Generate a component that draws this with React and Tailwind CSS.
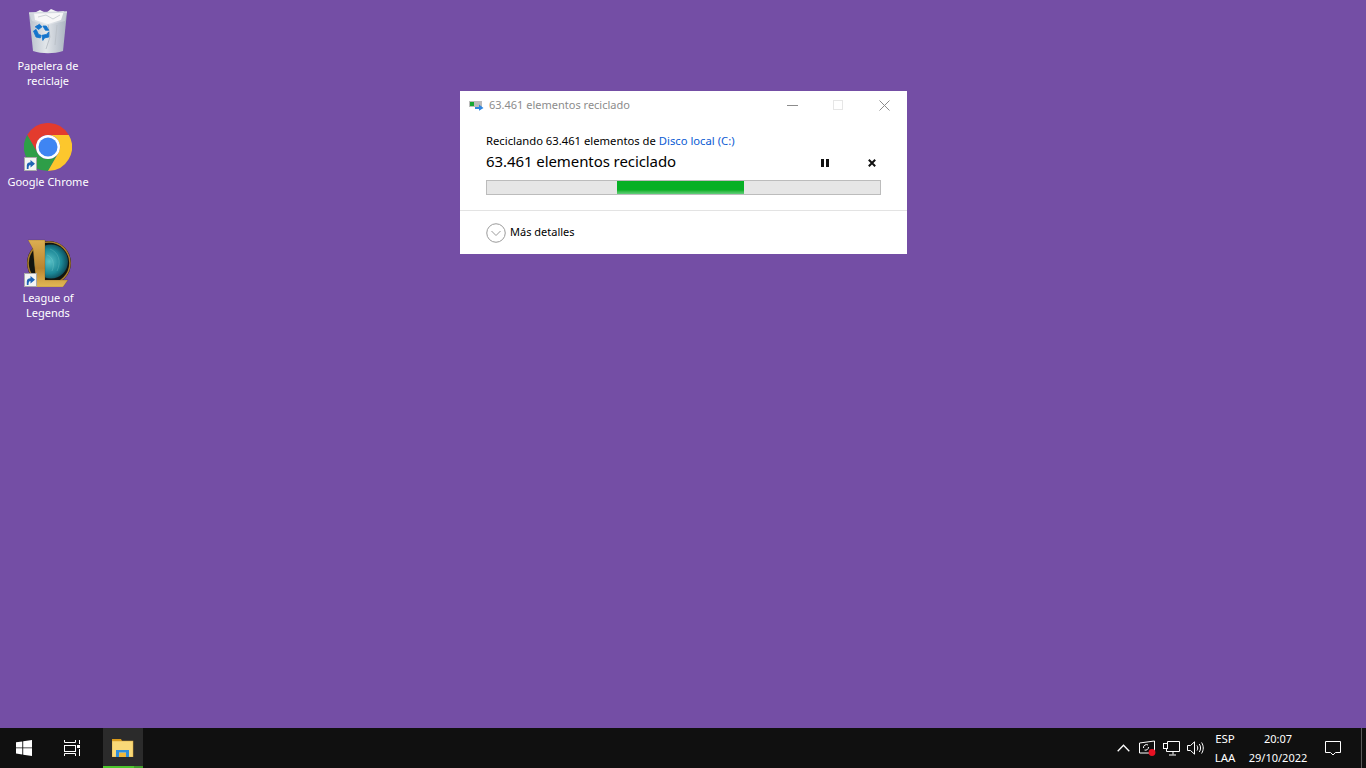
import React from "react";

const uiFont = "font-['Noto_Sans','Open_Sans',sans-serif]";

function ShortcutBadge() {
  return (
    <svg className="absolute left-0 bottom-0" width="13" height="14" viewBox="0 0 13 14">
      <rect x="0.5" y="0.5" width="12" height="13" fill="#f4f4f4" stroke="#a9a9a9" />
      <path d="M2.8 12V8.5C2.8 6.3 4.5 5.3 6.5 5.3V3L11 6.8L6.5 10.4V8.1C5.2 8.1 4.6 9 4.5 12Z" fill="#1f63b5" />
    </svg>
  );
}

function RecycleBin() {
  return (
    <svg width="48" height="48" viewBox="0 0 48 48">
      <defs>
        <linearGradient id="binBody" x1="0" y1="0" x2="1" y2="0">
          <stop offset="0" stopColor="#b9c1cc" />
          <stop offset="0.45" stopColor="#e2e6ea" />
          <stop offset="1" stopColor="#a9b2bf" />
        </linearGradient>
      </defs>
      <path d="M5 6L43 5L39 44C30 47 18 47 9 44Z" fill="url(#binBody)" />
      <path d="M10 6L16 3L22 6L27 2L34 5L40 4L37 13L24 17L11 13Z" fill="#f4f5f6" />
      <path d="M14 10L22 8L29 12L36 8M24 17L26 30L22 42M33 18L31 38M12 18L16 20" stroke="#bcc2c9" strokeWidth="1" fill="none" />
      <path d="M5 6L43 5L41 14L24 18L8 14Z" fill="#ffffff" fillOpacity="0.25" />
      <path d="M5 6L43 5" stroke="#d5dae1" strokeWidth="1.5" />
      <g transform="translate(1,2) scale(0.85)" stroke="#1474cc" strokeWidth="1">
        <path d="M12 21L17 18L20 21L16 24ZM21 20L25 20L28 25L24 25ZM25 30L28 27L28 33L23 34L21 37L20 31ZM10 26L13 24L16 30L19 31L18 34L13 33Z" fill="#1474cc" />
      </g>
    </svg>
  );
}

function ChromeLogo() {
  return (
    <svg width="48" height="48" viewBox="0 0 48 48">
      <path d="M24 12H44.8A24 24 0 0 0 3.2 12L13.6 30A12 12 0 0 1 24 12Z" fill="#e33b2e" />
      <path d="M3.2 12A24 24 0 0 0 24 48L34.4 30A12 12 0 0 1 13.6 30Z" fill="#2e9e48" />
      <path d="M44.8 12A24 24 0 0 1 24 48L34.4 30A12 12 0 0 0 24 12Z" fill="#fcc72d" />
      <circle cx="24" cy="24" r="12" fill="#ffffff" />
      <circle cx="24" cy="24" r="9.5" fill="#3f85f3" />
    </svg>
  );
}

function LeagueLogo() {
  return (
    <svg width="48" height="48" viewBox="0 0 48 48">
      <defs>
        <radialGradient id="lolWater" cx="0.45" cy="0.5" r="0.6">
          <stop offset="0" stopColor="#57c0c6" />
          <stop offset="0.6" stopColor="#1b8796" />
          <stop offset="1" stopColor="#0a3a48" />
        </radialGradient>
        <linearGradient id="lolGold" x1="0" y1="0" x2="0" y2="1">
          <stop offset="0" stopColor="#dcae52" />
          <stop offset="0.6" stopColor="#b9842f" />
          <stop offset="1" stopColor="#e3b955" />
        </linearGradient>
      </defs>
      <circle cx="25" cy="24" r="22" fill="#12140f" />
      <circle cx="25" cy="24" r="21" fill="none" stroke="#a87a2d" strokeWidth="1.6" />
      <circle cx="27" cy="22.5" r="17" fill="url(#lolWater)" />
      <path d="M26 10C34 13 38 22 33 32M23 16C29 18 31 25 28 32" fill="none" stroke="#a6e6e3" strokeOpacity="0.2" />
      <path d="M4 1H21V41H44L39 48H10L12 42L9 10Z" fill="url(#lolGold)" stroke="#3d2a0c" strokeOpacity="0.4" strokeWidth="0.5" />
    </svg>
  );
}

function DesktopIcon({ label, shortcut, children }) {
  return (
    <div className="w-[84px] h-[116px] flex flex-col items-center">
      <div className="relative w-[48px] h-[48px]">
        {children}
        {shortcut && <ShortcutBadge />}
      </div>
      <span className="mt-[3px] text-[11px] leading-[15px] text-center text-white whitespace-nowrap">{label}</span>
    </div>
  );
}

function DialogIcon() {
  return (
    <svg width="15" height="11" viewBox="0 0 15 11">
      <rect x="0" y="1" width="13" height="6" fill="#bcbcbc" />
      <rect x="1" y="2" width="4" height="4" fill="#16a832" />
      <path d="M6 7H10V4.5L14.5 8L10 10.8V9H6Z" fill="#2f86e0" />
    </svg>
  );
}

function RecycleDialog() {
  return (
    <div className="absolute left-[460px] top-[91px] w-[447px] h-[163px] bg-white flex flex-col">
      <div className="h-[29px] flex items-center pl-[9px]">
        <DialogIcon />
        <span className="ml-[5px] text-[11px] text-[#8c8c8c]">63.461 elementos reciclado</span>
        <div className="ml-auto flex items-center">
          <svg className="w-[46px] h-[29px]" viewBox="0 0 46 29"><rect x="18" y="14" width="11" height="1" fill="#8c8c8c" /></svg>
          <svg className="w-[46px] h-[29px]" viewBox="0 0 46 29"><rect x="18.5" y="9.5" width="9" height="9" fill="none" stroke="#e6e6e6" /></svg>
          <svg className="w-[46px] h-[29px]" viewBox="0 0 46 29"><path d="M18.5 9.5L28.5 19.5M28.5 9.5L18.5 19.5" stroke="#8c8c8c" fill="none" /></svg>
        </div>
      </div>
      <div className="pl-[26px] pr-[26px] pt-[13px] flex flex-col">
        <div className="h-[16px] text-[11.25px] leading-[16px] text-black">
          Reciclando 63.461 elementos de <span className="text-[#0b5bd3]">Disco local (C:)</span>
        </div>
        <div className="mt-[3px] h-[22px] flex items-center">
          <span className="mb-[4px] text-[15px] leading-[22px] text-black tracking-[-0.08px]">63.461 elementos reciclado</span>
          <div className="ml-auto flex items-center mr-[5px] gap-[39px]">
            <svg width="8" height="8" viewBox="0 0 8 8"><rect x="0" y="0" width="3" height="8" fill="#111" /><rect x="5" y="0" width="3" height="8" fill="#111" /></svg>
            <svg width="8" height="8" viewBox="0 0 8 8"><path d="M0.8 0.8L7.2 7.2M7.2 0.8L0.8 7.2" stroke="#111" strokeWidth="2" fill="none" /></svg>
          </div>
        </div>
        <div className="mt-[6px] h-[15px] border border-[#bcbcbc] bg-[#e6e6e6] pl-[130px]">
          <div className="w-[127px] h-full bg-gradient-to-b from-[#06b025] from-70% to-[#5fd07a]" />
        </div>
      </div>
      <div className="mt-[15px] border-t border-[#e3e3e3] flex-1 flex items-center pl-[26px]">
        <svg width="20" height="20" viewBox="0 0 20 20">
          <circle cx="10" cy="10" r="9.25" fill="none" stroke="#9a9a9a" />
          <path d="M5.5 8L10 12.5L14.5 8" fill="none" stroke="#9a9a9a" />
        </svg>
        <span className="ml-[4px] text-[11px] text-black">Más detalles</span>
      </div>
    </div>
  );
}

function WindowsLogo() {
  return (
    <svg width="16" height="16" viewBox="0 0 16 16">
      <path d="M0 2.2L6.3 1.4V7.4H0ZM7.2 1.3L16 0V7.4H7.2ZM0 8.3H6.3V14.4L0 13.6ZM7.2 8.3H16V16L7.2 14.7Z" fill="#ffffff" />
    </svg>
  );
}

function TaskView() {
  return (
    <svg width="17" height="16" viewBox="0 0 17 16" fill="none" stroke="#ffffff">
      <path d="M0.5 0V2.5H11.5V0M0.5 16V13.5H11.5V16" />
      <rect x="0.5" y="5.5" width="11" height="6" />
      <path d="M15.5 0V4M15.5 9V16" />
      <rect x="13" y="5" width="3" height="3" fill="#ffffff" stroke="none" />
    </svg>
  );
}

function ExplorerIcon() {
  return (
    <svg width="22" height="18" viewBox="0 0 22 18">
      <path d="M0 0H9L10 2H0Z" fill="#d99a1a" />
      <rect x="0" y="2" width="21" height="16" fill="#f9d978" stroke="#d8a53a" strokeWidth="0.5" />
      <path d="M4 16V11H17V16H14V13.5H7V16Z" fill="#2f8edb" />
      <rect x="7" y="14" width="7" height="4" fill="#f0b83a" />
      <path d="M4 16H7V18H4ZM14 16H17V18H14Z" fill="#2f8edb" />
    </svg>
  );
}

function Taskbar() {
  return (
    <div className="h-[40px] bg-[#101010] flex items-stretch text-white shrink-0">
      <div className="w-[48px] flex items-center justify-center"><WindowsLogo /></div>
      <div className="w-[48px] flex items-center justify-center"><TaskView /></div>
      <div className="ml-[7px] w-[40px] bg-[#2b2b2b] flex flex-col">
        <div className="flex-1 flex items-center justify-center pt-[2px]"><ExplorerIcon /></div>
        <div className="h-[2px] flex">
          <div className="w-[31px] bg-[#4cc72c]" />
          <div className="flex-1 bg-[#3f9a2a]" />
        </div>
      </div>
      <div className="ml-auto flex items-center">
        <div className="w-[24px] flex justify-center">
          <svg width="13" height="8" viewBox="0 0 13 8"><path d="M0.7 7.3L6.5 1.2L12.3 7.3" fill="none" stroke="#ffffff" strokeWidth="1.3" /></svg>
        </div>
        <div className="w-[24px] flex justify-center">
          <svg width="18" height="16" viewBox="0 0 18 16" fill="none">
            <path d="M1.5 3L16.5 1V13H1.5Z" stroke="#ffffff" />
            <path d="M5.5 8A3 3 0 0 1 10 5M10.5 7A3 3 0 0 1 6.5 10" stroke="#ffffff" />
            <circle cx="14" cy="12.5" r="3.4" fill="#e81123" />
          </svg>
        </div>
        <div className="w-[24px] flex justify-center">
          <svg width="17" height="15" viewBox="0 0 17 15" fill="none" stroke="#ffffff">
            <path d="M4.5 2.5V0.5H16.5V10.5H3.5V7.5" />
            <rect x="0.5" y="2.5" width="4" height="5" />
            <path d="M10 10.5V13.5M6 14H13" />
          </svg>
        </div>
        <div className="w-[24px] flex justify-center">
          <svg width="17" height="14" viewBox="0 0 17 14" fill="none" stroke="#ffffff">
            <path d="M0.5 4.5H3.5L7.5 0.8V13.2L3.5 9.5H0.5Z" />
            <path d="M10 4.5C11 6 11 8 10 9.5M12.3 3C14 5.5 14 8.5 12.3 11M14.6 1.5C16.8 5 16.8 9 14.6 12.5" />
          </svg>
        </div>
        <div className="w-[36px] flex flex-col items-center text-[11.5px] leading-[19px]">
          <span>ESP</span>
          <span>LAA</span>
        </div>
        <div className="w-[70px] flex flex-col items-center text-[11px] leading-[19px]">
          <span>20:07</span>
          <span>29/10/2022</span>
        </div>
        <div className="w-[40px] flex justify-center">
          <svg width="16" height="16" viewBox="0 0 16 16" fill="none" stroke="#ffffff">
            <path d="M0.5 1.5H15.5V12.5H10.5L8 15L5.5 12.5H0.5Z" />
          </svg>
        </div>
        <div className="w-[13px] h-full flex justify-end pr-[4px]">
          <div className="w-px h-full bg-[#5a5a5a]" />
        </div>
      </div>
    </div>
  );
}

export default function App() {
  return (
    <div className={`w-full h-screen overflow-hidden bg-[#744ea5] flex flex-col ${uiFont}`}>
      <div className="relative flex-1 pl-[6px] pt-[7px]">
        <DesktopIcon label={<>Papelera de<br />reciclaje</>}><RecycleBin /></DesktopIcon>
        <DesktopIcon label="Google Chrome" shortcut><ChromeLogo /></DesktopIcon>
        <DesktopIcon label={<>League of<br />Legends</>} shortcut><LeagueLogo /></DesktopIcon>
        <RecycleDialog />
      </div>
      <Taskbar />
    </div>
  );
}
